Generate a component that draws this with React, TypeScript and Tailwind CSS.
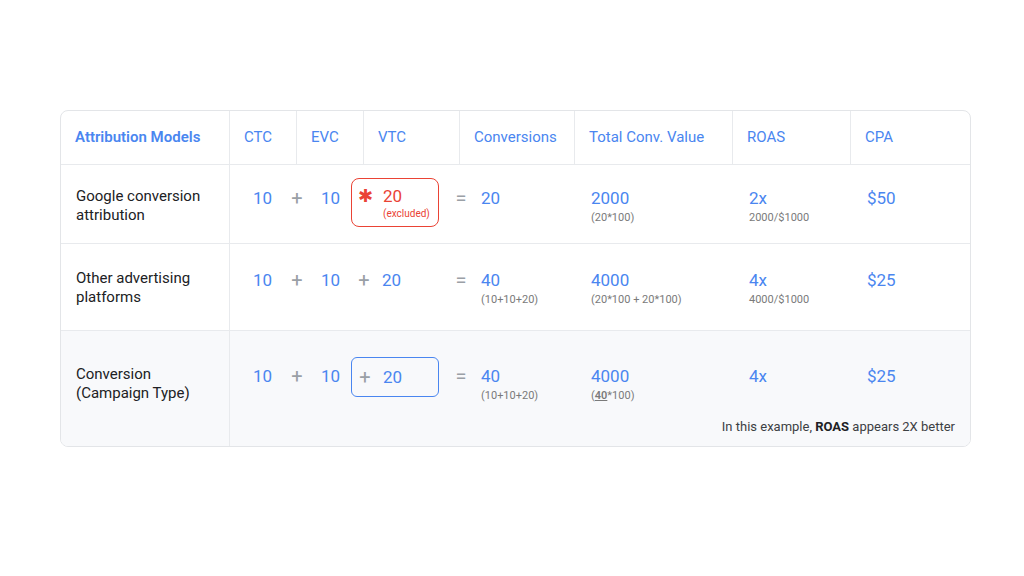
import React from 'react';

const blue = 'text-[#4a86f0]';

const Sub = ({ children }: { children: React.ReactNode }) => (
  <div className="text-[11px] leading-[14px] text-[#7a7a7a] mt-[2px]">{children}</div>
);

const Op = ({ c }: { c: string }) => (
  <div className="w-[16px] text-center text-[20px] leading-[22px] text-[#9aa0a6]">{c}</div>
);

interface RowProps {
  label: [string, string];
  vtc: React.ReactNode;
  conv: string;
  convSub?: React.ReactNode;
  total: string;
  totalSub: React.ReactNode;
  roas: string;
  roasSub?: string;
  cpa: string;
  className: string;
  pt: string;
  footer?: boolean;
}

const Row: React.FC<RowProps> = ({ label, vtc, conv, convSub, total, totalSub, roas, roasSub, cpa, className, pt, footer }) => (
  <div className={`flex border-t border-[#e8eaed] ${className}`}>
    <div className={`w-[169px] shrink-0 border-r border-[#e8eaed] pl-[15px] text-[15px] leading-[19px] text-[#202124] ${pt}`}>
      <div>{label[0]}</div>
      <div>{label[1]}</div>
    </div>
    <div className="flex-1 flex flex-col">
      <div className={`flex items-start text-[17px] leading-[22px] ${blue} ${pt}`}>
        <div className="w-[23px]" />
        <div className="w-[36px]">10</div>
        <Op c="+" />
        <div className="w-[16px]" />
        <div className="w-[30px]">10</div>
        <div className="w-[88px] shrink-0">{vtc}</div>
        <div className="w-[14px]" />
        <Op c="=" />
        <div className="w-[12px]" />
        <div className="w-[110px]">
          <div>{conv}</div>
          {convSub && <Sub>{convSub}</Sub>}
        </div>
        <div className="w-[158px]">
          <div>{total}</div>
          <Sub>{totalSub}</Sub>
        </div>
        <div className="w-[118px]">
          <div>{roas}</div>
          {roasSub && <Sub>{roasSub}</Sub>}
        </div>
        <div>{cpa}</div>
      </div>
      {footer && (
        <div className="mt-auto mb-[10px] mr-[15px] text-right text-[13px] text-[#3c4043]">
          In this example, <b className="text-[#202124]">ROAS</b> appears 2X better
        </div>
      )}
    </div>
  </div>
);

const heads: [string, string][] = [
  ['Attribution Models', 'w-[169px] font-semibold'],
  ['CTC', 'w-[67px]'],
  ['EVC', 'w-[67px]'],
  ['VTC', 'w-[96px]'],
  ['Conversions', 'w-[115px]'],
  ['Total Conv. Value', 'w-[158px]'],
  ['ROAS', 'w-[118px]'],
  ['CPA', 'flex-1'],
];

export default function App() {
  return (
    <div className="w-[1024px] h-[576px] bg-white pt-[110px] pl-[60px]" style={{ fontFamily: 'Roboto, "Liberation Sans", sans-serif' }}>
      <div className="w-[911px] border border-[#e3e5e8] rounded-[8px] overflow-hidden">
        <div className="flex h-[53px]">
          {heads.map(([t, w], i) => (
            <div
              key={t}
              className={`${w} shrink-0 flex items-center pl-[14px] text-[15px] ${blue} ${i < heads.length - 1 ? 'border-r border-[#e8eaed]' : ''}`}
            >
              {t}
            </div>
          ))}
        </div>
        <Row
          label={['Google conversion', 'attribution']}
          pt="pt-[22px]"
          className="h-[79px]"
          vtc={
            <div className="-mt-[9px] h-[49px] border border-[#ea4335] rounded-[8px] flex pl-[6px] pt-[6px] text-[#ea4335]">
              <div className="w-[14px] text-[18px] leading-[22px]">✱</div>
              <div className="ml-[11px]">
                <div>20</div>
                <div className="text-[10px] leading-[12px] mt-[1px]">(excluded)</div>
              </div>
            </div>
          }
          conv="20"
          total="2000"
          totalSub="(20*100)"
          roas="2x"
          roasSub="2000/$1000"
          cpa="$50"
        />
        <Row
          label={['Other advertising', 'platforms']}
          pt="pt-[25px]"
          className="h-[87px]"
          vtc={
            <div className="flex pl-[6px]">
              <div className="w-[14px] text-center text-[20px] leading-[22px] text-[#9aa0a6]">+</div>
              <div className="ml-[11px]">20</div>
            </div>
          }
          conv="40"
          convSub="(10+10+20)"
          total="4000"
          totalSub="(20*100 + 20*100)"
          roas="4x"
          roasSub="4000/$1000"
          cpa="$25"
        />
        <Row
          label={['Conversion', '(Campaign Type)']}
          pt="pt-[34px]"
          className="h-[116px] bg-[#f8f9fb]"
          footer
          vtc={
            <div className="-mt-[8px] h-[40px] border border-[#4a86f0] rounded-[6px] flex items-center pl-[6px]">
              <div className="w-[14px] text-center text-[20px] leading-[22px] text-[#9aa0a6]">+</div>
              <div className="ml-[11px]">20</div>
            </div>
          }
          conv="40"
          convSub="(10+10+20)"
          total="4000"
          totalSub={<>(<span className="underline font-semibold">40</span>*100)</>}
          roas="4x"
          cpa="$25"
        />
      </div>
    </div>
  );
}
